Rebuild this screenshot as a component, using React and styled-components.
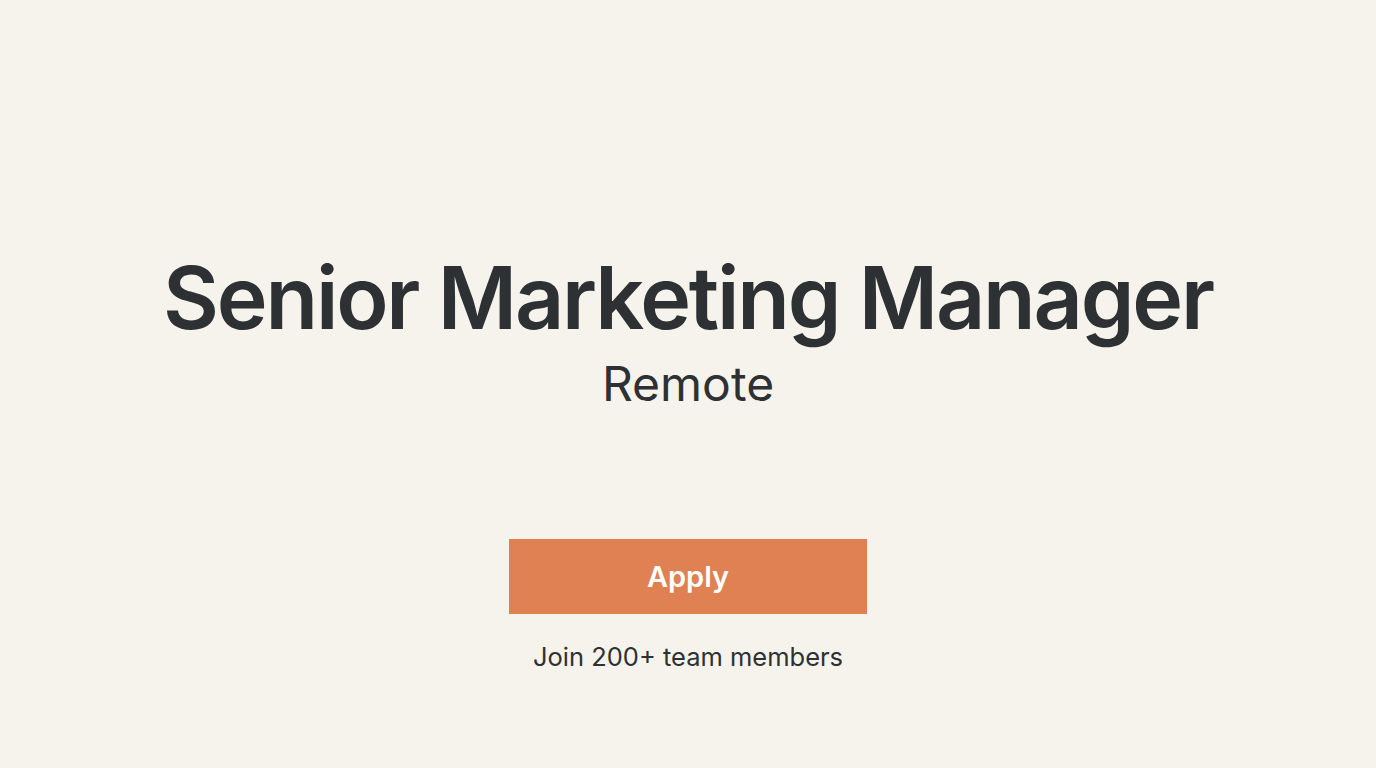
import React from 'react'
import styled, { createGlobalStyle } from 'styled-components'

const GlobalStyle = createGlobalStyle`
  html, body {
    margin: 0;
    padding: 0;
    background: #f6f3ec;
  }
  body {
    font-family: Inter, "Noto Sans", "Liberation Sans", sans-serif;
    color: #2e3134;
  }
`

const App = () => {
  return (
    <>
      <GlobalStyle />
      <Page>
        <Title>Senior Marketing Manager</Title>
        <Location>Remote</Location>
        <ApplyBtn>Apply</ApplyBtn>
        <Note>Join 200+ team members</Note>
      </Page>
    </>
  )
}

const Page = styled.main`
  height: 768px;
  box-sizing: border-box;
  display: flex;
  flex-direction: column;
  align-items: center;
  padding-top: 248px;
`
const Title = styled.h1`
  margin: 0;
  font-size: 86px;
  font-weight: 600;
  line-height: 100px;
  letter-spacing: -2.2px;
  color: #2e3134;
`
const Location = styled.div`
  margin-top: 8px;
  font-size: 48px;
  font-weight: 400;
  line-height: 56px;
  color: #2e3134;
`
const ApplyBtn = styled.button`
  all: unset;
  box-sizing: border-box;
  margin-top: 127px;
  width: 358px;
  height: 75px;
  display: flex;
  align-items: center;
  justify-content: center;
  background: #df8152;
  color: #ffffff;
  font-family: Inter, "Noto Sans", sans-serif;
  font-size: 29px;
  font-weight: 600;
  cursor: pointer;
`
const Note = styled.p`
  margin: 27px 0 0;
  font-size: 25.5px;
  line-height: 32px;
  color: #2e3134;
`

export default App
